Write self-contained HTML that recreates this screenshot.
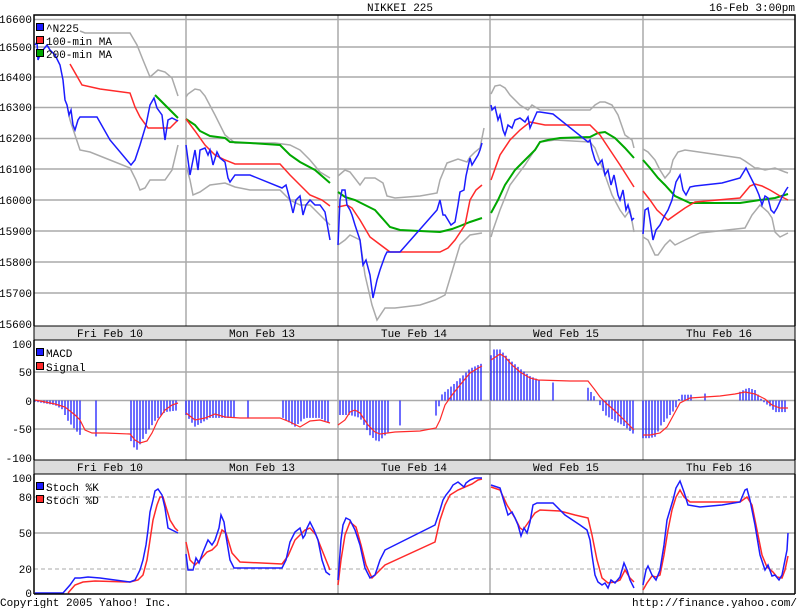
<!DOCTYPE html>
<html><head><meta charset="utf-8"><style>
html,body{margin:0;padding:0;background:#fff;width:800px;height:608px;overflow:hidden}
svg{display:block}
text{font-family:"Liberation Mono","DejaVu Sans Mono",monospace;font-size:11px;fill:#000}
.g{stroke:#aaa;stroke-width:1.5;fill:none}
.d{stroke:#aaa;stroke-width:1;fill:none;stroke-dasharray:4,3}
.b{stroke:#1c1cff;stroke-width:1.5;fill:none}
.r{stroke:#ff2a2a;stroke-width:1.5;fill:none}
.gr{stroke:#00a800;stroke-width:2;fill:none}
.bd{stroke:#aaa;stroke-width:1.5;fill:none}
</style></head><body>
<svg id="s" width="800" height="608" viewBox="0 0 800 608" xmlns="http://www.w3.org/2000/svg">
<rect width="800" height="608" fill="#fff"/>
<text x="400" y="11" text-anchor="middle">NIKKEI 225</text>
<text x="795" y="11" text-anchor="end">16-Feb 3:00pm</text>
<!-- main grid -->
<g class="g">
<line x1="34" y1="19.5" x2="795" y2="19.5"/><line x1="34" y1="47" x2="795" y2="47"/><line x1="34" y1="77" x2="795" y2="77"/><line x1="34" y1="107.5" x2="795" y2="107.5"/><line x1="34" y1="138.5" x2="795" y2="138.5"/><line x1="34" y1="169" x2="795" y2="169"/><line x1="34" y1="200" x2="795" y2="200"/><line x1="34" y1="231" x2="795" y2="231"/><line x1="34" y1="262" x2="795" y2="262"/><line x1="34" y1="293" x2="795" y2="293"/>
<line x1="186" y1="15" x2="186" y2="326"/><line x1="338" y1="15" x2="338" y2="326"/><line x1="490" y1="15" x2="490" y2="326"/><line x1="643" y1="15" x2="643" y2="326"/>
<line x1="34" y1="372" x2="795" y2="372"/><line x1="34" y1="400.5" x2="795" y2="400.5"/><line x1="34" y1="429" x2="795" y2="429"/>
<line x1="186" y1="340" x2="186" y2="460"/><line x1="338" y1="340" x2="338" y2="460"/><line x1="490" y1="340" x2="490" y2="460"/><line x1="643" y1="340" x2="643" y2="460"/>
<line x1="34" y1="533" x2="795" y2="533"/>
<line x1="186" y1="474" x2="186" y2="594"/><line x1="338" y1="474" x2="338" y2="594"/><line x1="490" y1="474" x2="490" y2="594"/><line x1="643" y1="474" x2="643" y2="594"/>
</g>
<line class="d" x1="34" y1="497" x2="795" y2="497"/><line class="d" x1="34" y1="569" x2="795" y2="569"/>
<!-- date bars -->
<rect x="34" y="326" width="761" height="14" fill="#ddd" stroke="#000"/>
<rect x="34" y="460" width="761" height="14" fill="#ddd" stroke="#000"/>
<g text-anchor="middle">
<text x="110" y="337">Fri Feb 10</text><text x="262" y="337">Mon Feb 13</text><text x="414" y="337">Tue Feb 14</text><text x="566" y="337">Wed Feb 15</text><text x="719" y="337">Thu Feb 16</text>
<text x="110" y="471">Fri Feb 10</text><text x="262" y="471">Mon Feb 13</text><text x="414" y="471">Tue Feb 14</text><text x="566" y="471">Wed Feb 15</text><text x="719" y="471">Thu Feb 16</text>
</g>
<!-- axis labels -->
<g text-anchor="end">
<text x="32" y="23">16600</text><text x="32" y="51">16500</text><text x="32" y="81">16400</text><text x="32" y="111">16300</text><text x="32" y="142">16200</text><text x="32" y="173">16100</text><text x="32" y="204">16000</text><text x="32" y="235">15900</text><text x="32" y="266">15800</text><text x="32" y="297">15700</text><text x="32" y="328">15600</text>
<text x="32" y="348">100</text><text x="32" y="376">50</text><text x="32" y="405">0</text><text x="32" y="433">-50</text><text x="32" y="462">-100</text>
<text x="32" y="482">100</text><text x="32" y="501">80</text><text x="32" y="537">50</text><text x="32" y="573">20</text><text x="32" y="597">0</text>
</g>
<text x="0" y="606">Copyright 2005 Yahoo! Inc.</text>
<text x="797" y="606" text-anchor="end">http://finance.yahoo.com/</text>
<g id="bars" stroke="#1c1cff" stroke-width="1.3"></g>
<!-- bands -->
<g class="bd">
<polyline points="80,31 85,33 130,33 137,45 143,60 150,77 158,70 165,72 172,78 178,96"/>
<polyline points="186,97 188,94 195,89 200,90 205,96 215,115 225,135 235,143 275,143 290,145 300,150 310,160 320,172 330,178"/>
<polyline points="338,176 345,170 350,172 360,185 365,178 375,178 383,183 387,196 395,198 420,196 437,193 440,180 447,163 458,159 467,162 470,157 475,152 480,148 484,128"/>
<polyline points="491,94 495,86 500,85 505,88 510,95 520,105 528,110 532,105 540,110 590,110 595,105 600,102 605,102 612,105 618,115 625,135 632,140 634,148"/>
<polyline points="643,149 648,152 655,160 660,170 665,178 670,172 673,160 678,152 685,150 692,151 740,158 745,161 755,168 758,168 765,170 775,168 785,172 788,173"/>
<polyline points="68,110 70,120 75,135 80,150 90,152 110,160 130,168 136,180 140,190 145,188 150,180 165,180 172,170 178,145"/>
<polyline points="186,165 190,180 193,195 200,192 210,185 225,183 235,187 250,190 280,190 290,200 300,205 310,205 320,215 330,225"/>
<polyline points="338,245 345,240 350,235 360,240 365,275 372,305 377,320 385,308 395,308 420,305 435,300 445,295 460,245 470,235 482,233"/>
<polyline points="491,237 493,230 500,210 510,185 525,165 540,142 555,140 590,142 595,148 605,175 612,195 620,210 625,217 630,210 634,232"/>
<polyline points="643,237 648,240 655,255 658,255 665,245 670,240 675,245 685,240 700,233 745,228 752,215 760,205 768,212 772,218 775,232 780,237 788,233"/>
</g>
<g class="gr">
<polyline points="155,95 165,105 178,118"/>
<polyline points="186,119 195,125 200,131 210,136 225,138 230,142 250,143 280,145 290,155 300,162 315,170 330,183"/>
<polyline points="338,192 345,197 355,200 375,210 390,227 400,230 440,232 452,229 460,226 470,222 482,218"/>
<polyline points="491,213 498,200 505,185 515,170 525,160 535,150 540,142 548,140 560,138 590,137 598,133 605,132 615,138 625,148 634,158"/>
<polyline points="643,160 650,168 658,178 665,185 675,196 690,203 740,203 760,200 775,198 788,194"/>
</g>
<g class="r">
<polyline points="70,64 78,78 82,85 100,89 130,93 135,107 140,117 148,128 170,128 178,120"/>
<polyline points="186,119 195,131 205,145 215,155 225,160 235,164 280,164 290,175 300,185 310,195 322,200 330,206"/>
<polyline points="338,207 347,205 352,208 360,220 370,237 390,252 440,252 448,248 455,240 465,225 470,200 476,190 482,185"/>
<polyline points="491,180 500,155 510,140 520,130 530,122 535,123 545,125 590,125 600,135 610,150 620,165 634,187"/>
<polyline points="643,191 650,200 657,210 668,220 675,215 685,208 695,202 740,198 750,186 755,184 762,186 770,190 780,196 788,200"/>
</g>
<g class="b">
<polyline points="35,45 37,42 38,60 40,55 43,50 47,45 50,50 55,55 60,65 63,80 65,100 67,105 69,115 71,110 73,125 75,130 78,120 80,117 97,117 110,140 131,165 135,160 140,145 146,125 150,105 154,98 157,108 162,115 165,140 168,120 172,118 178,121"/>
<polyline points="186,145 188,160 190,175 192,165 195,150 198,170 200,150 205,148 208,155 210,150 213,165 217,152 220,158 225,162 228,178 230,182 235,175 250,175 282,188 286,185 290,200 293,213 296,200 300,196 303,215 306,205 310,200 315,205 320,205 325,212 330,240"/>
<polyline points="338,245 340,200 342,190 345,190 347,205 350,210 352,215 355,225 360,240 363,265 366,260 370,275 373,298 377,280 380,270 385,256 387,252 400,252 437,210 440,200 443,215 445,215 448,220 451,225 455,222 458,205 460,192 464,190 466,176 470,158 472,165 475,160 478,155 480,150 482,143"/>
<polyline points="491,105 492,110 495,107 498,120 500,115 503,130 505,135 508,125 512,128 515,120 520,118 525,122 528,117 530,128 533,121 537,112 540,112 553,114 588,142 590,140 592,150 595,160 598,165 602,160 605,175 608,170 611,185 614,175 618,195 620,200 623,190 626,210 628,205 632,220 634,218"/>
<polyline points="643,234 645,210 648,208 650,220 653,240 656,230 660,225 665,215 668,210 672,200 676,182 680,175 683,190 686,195 690,187 695,186 722,183 740,178 746,168 748,172 751,178 756,188 759,195 762,205 765,196 768,198 771,210 774,213 777,208 782,197 786,190 788,187"/>
</g>
<!-- MACD signal -->
<g class="r" style="stroke-width:1.2">
<polyline points="35,400 45,402 55,404 65,407 75,415 80,420 85,430 92,433 105,433 130,434 135,440 140,443 147,441 152,433 158,420 165,410 172,405 178,403"/>
<polyline points="186,413 195,420 205,418 215,414 225,417 240,418 280,418 290,422 300,427 310,421 320,420 330,423"/>
<polyline points="338,425 345,420 350,412 355,410 360,413 368,425 375,432 380,434 395,432 420,431 436,428 440,420 445,405 452,395 460,385 470,373 480,367 482,366"/>
<polyline points="491,360 500,354 505,357 512,365 520,372 530,378 538,380 570,381 588,381 595,390 600,397 607,404 615,411 625,421 634,430"/>
<polyline points="643,435 650,435 660,433 667,427 673,416 680,403 690,398 720,396 735,394 745,392 755,394 765,399 772,405 780,408 788,408"/>
</g>
<!-- Stoch -->
<g class="r">
<polyline points="68,593 75,585 83,582 95,581 130,582 138,580 143,575 147,560 150,540 153,520 157,505 160,497 163,497 166,507 170,520 175,528 178,531"/>
<polyline points="186,542 190,560 195,565 200,560 207,552 212,550 217,545 222,530 226,533 232,553 240,562 282,564 288,556 295,540 300,535 305,530 310,528 316,535 322,550 328,565 330,570"/>
<polyline points="338,585 341,560 345,535 350,522 356,527 361,545 366,565 372,578 378,572 385,565 435,542 440,520 445,505 450,495 458,490 465,487 472,484 478,480 482,479"/>
<polyline points="491,487 500,490 507,505 515,518 520,528 523,530 530,520 535,513 540,510 560,511 575,515 588,518 592,535 597,560 602,578 608,583 615,582 620,580 625,570 630,578 634,582"/>
<polyline points="643,590 647,583 652,576 656,577 660,575 664,555 668,530 672,510 676,497 680,490 684,497 690,502 740,502 747,497 752,505 757,530 762,555 767,567 773,572 777,577 782,578 785,570 788,556"/>
</g>
<g class="b">
<polyline points="35,593 63,593 70,585 75,578 80,578 88,577 100,578 130,582 135,580 140,570 143,560 146,545 148,530 150,512 153,500 155,491 158,489 162,495 165,508 168,528 172,530 178,533"/>
<polyline points="186,554 188,570 193,570 196,558 199,563 203,552 208,540 212,545 215,540 219,528 221,515 224,522 226,536 230,560 234,568 282,568 286,560 290,542 295,532 300,528 303,538 305,535 307,528 310,522 314,530 318,540 322,560 326,572 330,575"/>
<polyline points="338,580 341,540 343,525 346,518 350,520 355,530 360,545 365,568 370,578 375,575 380,560 385,550 395,545 435,525 440,510 443,500 446,495 450,490 453,485 458,482 464,487 466,483 470,480 475,478 482,478"/>
<polyline points="491,485 500,488 505,505 508,515 512,512 515,518 518,525 521,536 524,528 527,533 530,522 533,505 537,503 553,503 565,515 580,525 587,530 590,540 592,555 595,575 598,582 602,585 605,583 608,588 611,580 615,583 620,577 624,563 627,570 630,580 634,588"/>
<polyline points="643,585 646,570 648,566 652,575 656,580 660,570 664,545 667,520 670,510 673,500 676,488 680,481 684,492 688,505 700,507 722,505 740,502 745,490 747,489 750,500 755,525 760,555 765,570 768,565 772,576 775,575 779,580 782,575 785,560 787,550 788,533"/>
</g>
<!-- frames -->
<g stroke="#000" stroke-width="1.5" fill="none">
<polyline points="34,326 34,15 795,15 795,326"/>
<line x1="34" y1="340" x2="34" y2="460"/><line x1="795" y1="340" x2="795" y2="460"/>
<line x1="34" y1="474" x2="34" y2="594"/><line x1="795" y1="474" x2="795" y2="594"/>
<line x1="34" y1="594" x2="795" y2="594"/>
</g>
<!-- legends -->
<g stroke="#000" stroke-width="1">
<rect x="36.5" y="23.5" width="7" height="7" fill="#1c1cff"/><rect x="36.5" y="36.5" width="7" height="7" fill="#ff2a2a"/><rect x="36.5" y="49.5" width="7" height="7" fill="#00a800"/>
<rect x="36.5" y="348.5" width="7" height="7" fill="#1c1cff"/><rect x="36.5" y="362.5" width="7" height="7" fill="#ff2a2a"/>
<rect x="36.5" y="482.5" width="7" height="7" fill="#1c1cff"/><rect x="36.5" y="495.5" width="7" height="7" fill="#ff2a2a"/>
</g>
<text x="46" y="32">^N225</text><text x="46" y="45">100-min MA</text><text x="46" y="58">200-min MA</text>
<text x="46" y="357">MACD</text><text x="46" y="371">Signal</text>
<text x="46" y="491">Stoch %K</text><text x="46" y="504">Stoch %D</text>
</svg>
<script>
(function(){
var segs=[
[[35,-2],[45,-5],[55,-8],[62,-15],[68,-35],[75,-50],[82,-63]],
[[96,-62],[96,-62]],
[[131,-70],[136,-88],[145,-60],[155,-35],[165,-20],[178,-17]],
[[186,-25],[195,-45],[200,-40],[210,-30],[235,-30]],
[[248,-30],[248,-30]],
[[283,-30],[295,-45],[305,-30],[320,-30],[330,-40]],
[[340,-25],[350,-25],[360,-30],[370,-60],[378,-72],[388,-55]],
[[400,-43],[400,-43]],
[[436,-26],[439,-10],[441,9],[455,30],[470,55],[482,64]],
[[491,78],[494,88],[500,88],[510,70],[520,55],[530,42],[540,35]],
[[553,31],[553,31]],
[[588,22],[595,5],[600,-8],[605,-25],[615,-35],[625,-45],[635,-60]],
[[643,-65],[650,-65],[656,-62],[660,-45],[670,-25],[675,-15],[678,-5],[680,10],[692,10]],
[[705,12],[705,12]],
[[740,15],[748,22],[755,18],[760,5],[765,-5],[770,-10],[775,-20],[785,-20],[787,-15]]
];
var g=document.getElementById('bars'),ns='http://www.w3.org/2000/svg';
function val(p,x){for(var i=0;i<p.length-1;i++){if(x>=p[i][0]&&x<=p[i+1][0]){var t=(p[i+1][0]-p[i][0])||1;return p[i][1]+(p[i+1][1]-p[i][1])*(x-p[i][0])/t;}}return p[p.length-1][1];}
segs.forEach(function(p){var a=p[0][0],b=p[p.length-1][0];for(var x=a;x<=b;x+=3){var v=val(p,x);var l=document.createElementNS(ns,'line');l.setAttribute('x1',x);l.setAttribute('x2',x);l.setAttribute('y1',400.5);l.setAttribute('y2',400.5-v*0.58);g.appendChild(l);}});
})();
</script>
</body></html>
